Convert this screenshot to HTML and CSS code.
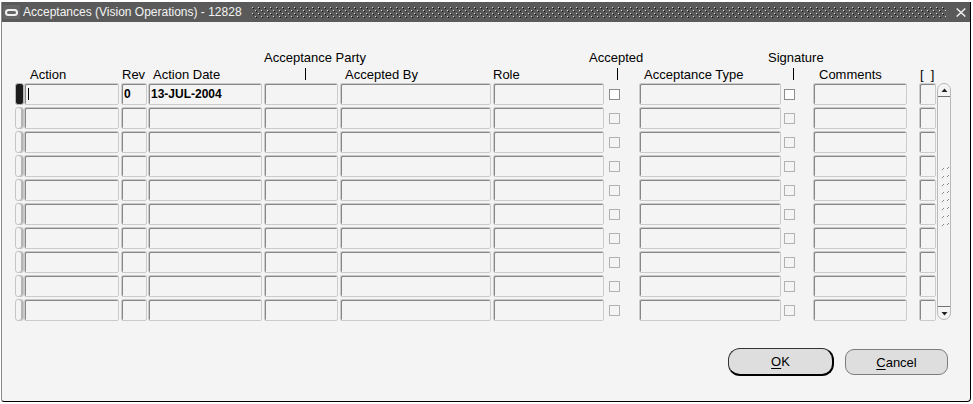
FILE: index.html
```html
<!DOCTYPE html>
<html>
<head>
<meta charset="utf-8">
<title>Acceptances</title>
<link rel="stylesheet" href="styles.css">
</head>
<body>
<div class="window">
  <div class="titlebar">
    <svg class="ticon" width="17" height="14" viewBox="0 0 17 14"><rect x="0" y="0" width="17" height="14" fill="#666"/><rect x="3" y="5" width="11" height="5" rx="2.5" fill="none" stroke="#f2f2f2" stroke-width="2"/></svg>
    <span class="title">Acceptances (Vision Operations) - 12828</span>
    <svg class="tdots" height="11"><defs><pattern id="tp" width="6" height="6" patternUnits="userSpaceOnUse"><rect x="0" y="0" width="1" height="1" fill="#d8d8d8"/><rect x="1" y="1" width="1" height="1" fill="#111"/><rect x="3" y="3" width="1" height="1" fill="#d8d8d8"/><rect x="4" y="4" width="1" height="1" fill="#111"/></pattern></defs><rect width="100%" height="100%" fill="url(#tp)"/></svg>
    <svg class="close" width="10" height="9" viewBox="0 0 10 9"><path d="M0.7 0.5L9.3 8.5M9.3 0.5L0.7 8.5" stroke="#eeeeee" stroke-width="1.5" fill="none"/></svg>
  </div>
  <div class="content">
    <div class="cols hdr">
      <span class="h1 h-party">Acceptance Party</span>
      <span class="h1 h-accepted">Accepted</span>
      <span class="h1 h-sig">Signature</span>
      <span class="h2 c2 pl6">Action</span>
      <span class="h2 c3 h-rev">Rev</span>
      <span class="h2 c4 pl5">Action Date</span>
      <span class="h2 c5 bar bar-party"></span>
      <span class="h2 c6 pl5">Accepted By</span>
      <span class="h2 c7">Role</span>
      <span class="h2 c8 bar bar-acc"></span>
      <span class="h2 c9 pl5">Acceptance Type</span>
      <span class="h2 c10 bar bar-sig"></span>
      <span class="h2 c11 pl6">Comments</span>
      <span class="h2 c12 pl1">[&nbsp;&nbsp;]</span>
    </div>
    <div class="cols body">
      <svg class="scroll" width="14" height="237" viewBox="0 0 14 237">
        <rect x="0.5" y="0.5" width="13" height="236" rx="6.5" fill="#f4f4f4" stroke="#b8b8b8"/>
        <line x1="1" y1="13.5" x2="13" y2="13.5" stroke="#707070"/>
        <path d="M4.5 9h6l-3-3.5z" fill="#222"/>
        <line x1="1" y1="223.5" x2="13" y2="223.5" stroke="#707070"/>
        <path d="M4.5 229h6l-3 3.5z" fill="#222"/>
        <g fill="#8a8a8a">
          <rect x="5" y="86" width="1" height="1"/><rect x="6" y="85" width="1" height="1"/><rect x="10" y="85" width="1" height="1"/><rect x="11" y="84" width="1" height="1"/>
          <rect x="5" y="94" width="1" height="1"/><rect x="6" y="93" width="1" height="1"/><rect x="10" y="93" width="1" height="1"/><rect x="11" y="92" width="1" height="1"/>
          <rect x="5" y="102" width="1" height="1"/><rect x="6" y="101" width="1" height="1"/><rect x="10" y="101" width="1" height="1"/><rect x="11" y="100" width="1" height="1"/>
          <rect x="5" y="110" width="1" height="1"/><rect x="6" y="109" width="1" height="1"/><rect x="10" y="109" width="1" height="1"/><rect x="11" y="108" width="1" height="1"/>
          <rect x="5" y="118" width="1" height="1"/><rect x="6" y="117" width="1" height="1"/><rect x="10" y="117" width="1" height="1"/><rect x="11" y="116" width="1" height="1"/>
          <rect x="5" y="126" width="1" height="1"/><rect x="6" y="125" width="1" height="1"/><rect x="10" y="125" width="1" height="1"/><rect x="11" y="124" width="1" height="1"/>
          <rect x="5" y="134" width="1" height="1"/><rect x="6" y="133" width="1" height="1"/><rect x="10" y="133" width="1" height="1"/><rect x="11" y="132" width="1" height="1"/>
          <rect x="5" y="142" width="1" height="1"/><rect x="6" y="141" width="1" height="1"/><rect x="10" y="141" width="1" height="1"/><rect x="11" y="140" width="1" height="1"/>
        </g>
      </svg>

      <span class="ind cur"></span><span class="f w95"><span class="cursor"></span></span><span class="f w25 b">0</span><span class="f w114 b">13-JUL-2004</span><span class="f w74"></span><span class="f w151"></span><span class="f w111"></span><span class="cb cb1 on"></span><span class="f w142"></span><span class="cb cb2 on"></span><span class="f w94"></span><span class="f w17"></span>

      <span class="ind"></span><span class="f w95"></span><span class="f w25"></span><span class="f w114"></span><span class="f w74"></span><span class="f w151"></span><span class="f w111"></span><span class="cb cb1"></span><span class="f w142"></span><span class="cb cb2"></span><span class="f w94"></span><span class="f w17"></span>

      <span class="ind"></span><span class="f w95"></span><span class="f w25"></span><span class="f w114"></span><span class="f w74"></span><span class="f w151"></span><span class="f w111"></span><span class="cb cb1"></span><span class="f w142"></span><span class="cb cb2"></span><span class="f w94"></span><span class="f w17"></span>

      <span class="ind"></span><span class="f w95"></span><span class="f w25"></span><span class="f w114"></span><span class="f w74"></span><span class="f w151"></span><span class="f w111"></span><span class="cb cb1"></span><span class="f w142"></span><span class="cb cb2"></span><span class="f w94"></span><span class="f w17"></span>

      <span class="ind"></span><span class="f w95"></span><span class="f w25"></span><span class="f w114"></span><span class="f w74"></span><span class="f w151"></span><span class="f w111"></span><span class="cb cb1"></span><span class="f w142"></span><span class="cb cb2"></span><span class="f w94"></span><span class="f w17"></span>

      <span class="ind"></span><span class="f w95"></span><span class="f w25"></span><span class="f w114"></span><span class="f w74"></span><span class="f w151"></span><span class="f w111"></span><span class="cb cb1"></span><span class="f w142"></span><span class="cb cb2"></span><span class="f w94"></span><span class="f w17"></span>

      <span class="ind"></span><span class="f w95"></span><span class="f w25"></span><span class="f w114"></span><span class="f w74"></span><span class="f w151"></span><span class="f w111"></span><span class="cb cb1"></span><span class="f w142"></span><span class="cb cb2"></span><span class="f w94"></span><span class="f w17"></span>

      <span class="ind"></span><span class="f w95"></span><span class="f w25"></span><span class="f w114"></span><span class="f w74"></span><span class="f w151"></span><span class="f w111"></span><span class="cb cb1"></span><span class="f w142"></span><span class="cb cb2"></span><span class="f w94"></span><span class="f w17"></span>

      <span class="ind"></span><span class="f w95"></span><span class="f w25"></span><span class="f w114"></span><span class="f w74"></span><span class="f w151"></span><span class="f w111"></span><span class="cb cb1"></span><span class="f w142"></span><span class="cb cb2"></span><span class="f w94"></span><span class="f w17"></span>

      <span class="ind"></span><span class="f w95"></span><span class="f w25"></span><span class="f w114"></span><span class="f w74"></span><span class="f w151"></span><span class="f w111"></span><span class="cb cb1"></span><span class="f w142"></span><span class="cb cb2"></span><span class="f w94"></span><span class="f w17"></span>
    </div>
    <div class="buttons">
      <button class="btn ok"><u>O</u>K</button>
      <button class="btn cancel"><u>C</u>ancel</button>
    </div>
  </div>
</div>
</body>
</html>
```

FILE: styles.css
```css
html, body {
  margin: 0;
  padding: 0;
  background: #ffffff;
}
body {
  font-family: "Liberation Sans", Arial, sans-serif;
  color: #000;
}
.window {
  box-sizing: border-box;
  margin: 2px 0 0 1px;
  width: 970px;
  height: 400px;
  background: #f4f4f4;
  border-left: 1px solid #8a8a8a;
  border-right: 1px solid #000;
  border-bottom: 1px solid #000;
  border-radius: 0 0 4px 3px;
  display: flex;
  flex-direction: column;
}
.titlebar {
  height: 20px;
  background: #5a5a5a;
  display: flex;
  align-items: center;
  padding: 0 4px 0 1px;
  flex: none;
}
.ticon {
  flex: none;
  margin-right: 3px;
}
.title {
  color: #f4f4f4;
  font-size: 12px;
  white-space: nowrap;
  flex: none;
}
.tdots {
  flex: 1;
  margin-left: 10px;
  height: 11px;
}
.close {
  flex: none;
  margin-left: 10px;
}
.content {
  padding: 29px 0 0 12px;
  flex: 1;
  display: flex;
  flex-direction: column;
}
.cols {
  display: grid;
  grid-template-columns: 10px 97px 27px 116px 76px 153px 112px 34px 143px 31px 106px 18px 14px;
}
.hdr {
  grid-template-rows: 14px 14px;
  row-gap: 3px;
  font-size: 13px;
  line-height: 14px;
}
.hdr span {
  white-space: nowrap;
}
.h1 { grid-row: 1; }
.h2 { grid-row: 2; }
.h-party { grid-column: 5 / span 3; }
.h-accepted { grid-column: 7 / span 3; padding-left: 96px; }
.h-sig { grid-column: 9 / span 3; padding-left: 129px; }
.c2 { grid-column: 2; }
.c3 { grid-column: 3; }
.c4 { grid-column: 4; }
.c5 { grid-column: 5; }
.c6 { grid-column: 6; }
.c7 { grid-column: 7; }
.c8 { grid-column: 8; }
.c9 { grid-column: 9; }
.c10 { grid-column: 10; }
.c11 { grid-column: 11; }
.c12 { grid-column: 12; }
.pl1 { padding-left: 1px; }
.pl5 { padding-left: 5px; }
.pl6 { padding-left: 6px; }
.h-rev { padding-left: 1px; }
.bar {
  width: 1px;
  height: 12px;
  background: #000;
  justify-self: start;
}
.bar-party { margin-left: 41px; }
.bar-acc { margin-left: 12px; }
.bar-sig { margin-left: 11px; }

.body {
  margin-top: 1px;
  grid-auto-rows: 22px;
  row-gap: 2px;
}
.scroll {
  grid-column: 13;
  grid-row: 1 / span 10;
  display: block;
}
.ind {
  box-sizing: border-box;
  width: 9px;
  height: 22px;
  margin-left: 1px;
  border: 1px solid #c6c6c6;
  border-radius: 3px;
  background: #f4f4f4;
  box-shadow: inset -2px 0 0 #b4b4b4;
}
.ind.cur {
  background: #1c1c1c;
  border-color: #b8b8b8;
  box-shadow: none;
}
.f {
  box-sizing: border-box;
  height: 22px;
  border: 1px solid #cbcbcb;
  border-radius: 2px;
  box-shadow: inset 1px 1px 0 #878787;
  background: #f4f4f4;
  display: flex;
  align-items: center;
  padding-left: 2px;
  font-size: 12px;
  white-space: nowrap;
  overflow: hidden;
}
.f.b { font-weight: bold; }
.w95 { width: 95px; }
.w25 { width: 26px; }
.w114 { width: 114px; }
.w74 { width: 74px; }
.w151 { width: 151px; }
.w111 { width: 111px; }
.w142 { width: 142px; }
.w94 { width: 94px; }
.w17 { width: 17px; }
.cursor {
  display: block;
  width: 1px;
  height: 12px;
  background: #000;
  margin-left: 1px;
}
.cb {
  box-sizing: border-box;
  width: 11px;
  height: 11px;
  border: 1px solid #b2b2b2;
  background: #f4f4f4;
  align-self: center;
}
.cb.on {
  background: #ffffff;
  border-color: #8c8c8c;
}
.cb1 { margin-left: 4px; }
.cb2 { margin-left: 2px; }

.buttons {
  display: flex;
  justify-content: flex-end;
  align-items: center;
  gap: 11px;
  margin-top: 27px;
  padding-right: 22px;
}
.btn {
  box-sizing: border-box;
  font-family: "Liberation Sans", Arial, sans-serif;
  font-size: 13px;
  color: #000;
  background: #dedede;
  padding: 0;
  margin: 0;
}
.btn u {
  text-underline-offset: 2px;
}
.ok {
  width: 106px;
  height: 28px;
  border: 1px solid #333;
  border-right: 2px solid #000;
  border-bottom: 2px solid #000;
  border-radius: 12px;
}
.cancel {
  width: 103px;
  height: 26px;
  border: 1px solid #7c7c7c;
  border-radius: 9px;
}
```
